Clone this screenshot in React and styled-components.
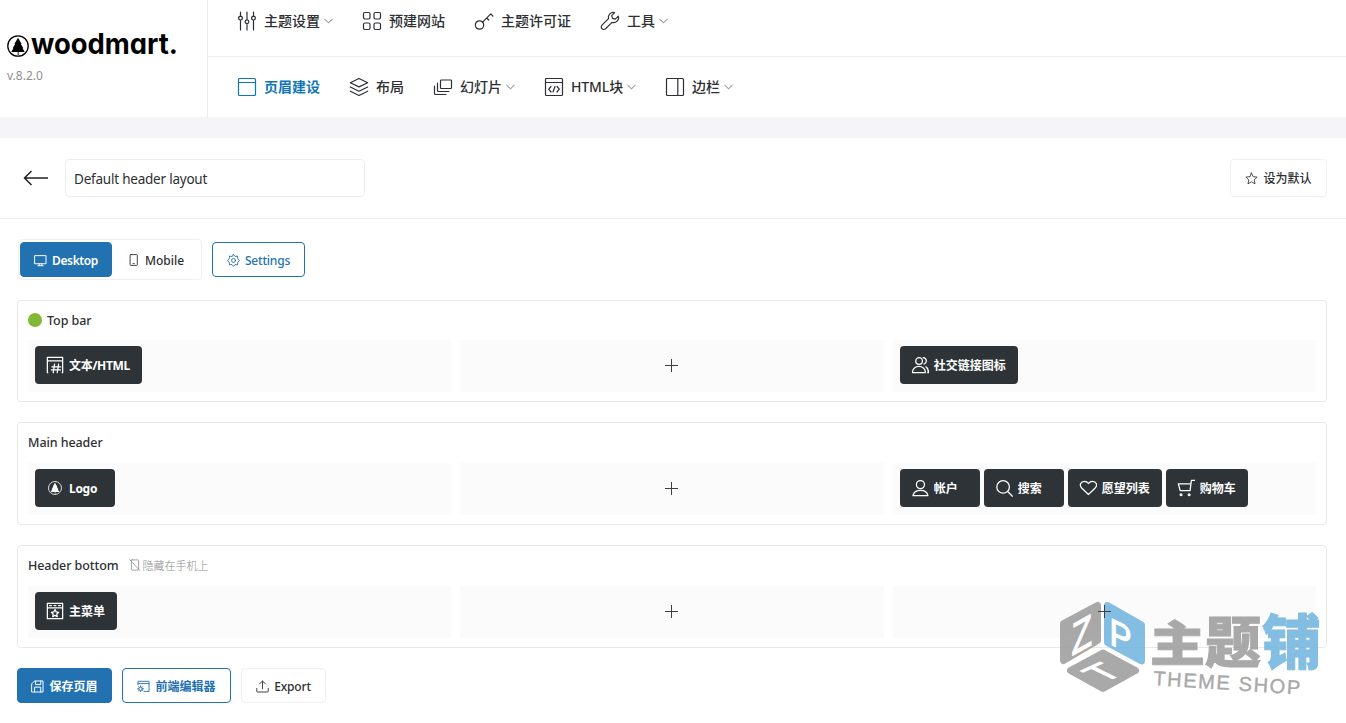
import React from 'react';
import styled, { createGlobalStyle } from 'styled-components';

const GlobalStyle = createGlobalStyle`
  * {
    box-sizing: border-box;
  }

  body {
    margin: 0;
    background: #fff;
    color: #2d2f33;
    font-family: "Noto Sans", "Noto Sans CJK SC", sans-serif;
    font-size: 13px;
    overflow: hidden;
  }
`;

const Page = styled.div`
  position: relative;
  width: 1346px;
  height: 723px;
  overflow: hidden;
`;

const Masthead = styled.header`
  display: flex;
  height: 117px;
`;

const Brand = styled.div`
  width: 208px;
  padding: 25px 0 0 7px;
  border-right: 1px solid #ebebeb;

  > svg {
    display: block;
    overflow: visible;
  }
`;

const LogoText = styled.text`
  font-family: Inter, sans-serif;
  font-size: 28.5px;
  font-weight: 700;
  font-feature-settings: "cv11" 1;
`;

const Version = styled.div`
  margin-top: 1px;
  font-size: 12px;
  line-height: 16px;
  color: #8e8e8e;
`;

const Nav = styled.nav`
  flex: 1;
`;

const NavRow = styled.div`
  display: flex;
  align-items: center;
  gap: 29px;
  height: ${props => props.$height}px;
  padding: ${props => props.$pad};
  border-bottom: ${props => props.$line ? '1px solid #efefef' : 'none'};
`;

const NavItem = styled.a`
  display: flex;
  align-items: center;
  height: 20px;
  font-size: 14px;
  line-height: 20px;
  font-weight: ${props => props.$active ? 700 : 500};
  letter-spacing: ${props => props.$spacing || 0}px;
  white-space: nowrap;
  color: ${props => props.$active ? '#0f76b8' : '#2d2f33'};

  > svg:first-child {
    margin-right: 7px;
  }

  .arrow {
    margin-left: 4px;
    color: #a0a0a0;
  }
`;

const Band = styled.div`
  height: 21px;
  background: #f5f5f7;
`;

const TitleBar = styled.div`
  display: flex;
  align-items: center;
  height: 81px;
  padding: 0 19px 0 22px;
  border-bottom: 1px solid #ececec;
`;

const NameInput = styled.input`
  width: 300px;
  height: 38px;
  margin: 0 auto 0 15px;
  padding: 2px 8px 0;
  border: 1px solid #ededed;
  border-radius: 4px;
  background: #fff;
  color: #2d2f33;
  font: 400 13.5px "Noto Sans", sans-serif;
  letter-spacing: -0.22px;
`;

const Button = styled.button`
  display: flex;
  align-items: center;
  justify-content: center;
  gap: 5px;
  width: ${props => props.$width}px;
  height: ${props => props.$height || 35}px;
  padding: ${props => props.$height ? 0 : '1px'} 0 0;
  border: 1px solid ${props => props.$kind === 'plain' ? '#f0f0f0' : '#2271b1'};
  border-color: ${props => props.$flat && 'transparent'};
  border-radius: 4px;
  background: ${props => props.$kind === 'primary' ? '#2271b1' : '#fff'};
  color: ${props => props.$kind === 'primary' ? '#fff' : props.$kind === 'outline' ? '#2271b1' : '#2d2f33'};
  font-family: inherit;
  font-size: 12px;
  font-weight: ${props => props.$weight || 500};
  letter-spacing: ${props => props.$spacing || 0}px;
  white-space: nowrap;
`;

const Toolbar = styled.div`
  display: flex;
  align-items: center;
  gap: 10px;
  margin: 20px 0 20px 18px;
`;

const Switcher = styled.div`
  display: flex;
  width: 184px;
  height: 41px;
  padding: 2px 1px;
  border: 1px solid #f0f0f0;
  border-radius: 4px;
`;

const Rows = styled.main`
  display: flex;
  flex-direction: column;
  gap: 20px;
  padding: 0 19px 0 17px;
`;

const Card = styled.section`
  height: ${props => props.$height}px;
  padding: 0 10px;
  border: 1px solid #e8e8e8;
  border-radius: 4px;
`;

const CardTitle = styled.div`
  display: flex;
  align-items: center;
  height: ${props => props.$height}px;
  padding-bottom: ${props => props.$height < 40 ? 1 : 2}px;
  font-size: 12.5px;
  letter-spacing: -0.08px;
  font-weight: 500;
`;

const Dot = styled.i`
  width: 14px;
  height: 14px;
  margin-right: 5px;
  border-radius: 50%;
  background: #83b735;
`;

const Hint = styled.span`
  display: flex;
  align-items: center;
  gap: 2px;
  margin-left: 10px;
  font-size: 11px;
  font-weight: 300;
  color: #8a8a8a;
  letter-spacing: 0;
`;

const Columns = styled.div`
  display: grid;
  grid-template-columns: repeat(3, 1fr);
  gap: 9px;
`;

const Column = styled.div`
  display: flex;
  align-items: center;
  justify-content: ${props => props.$empty ? 'center' : 'flex-start'};
  gap: 4px;
  height: 52px;
  padding: 0 7px 2px;
  background: #fbfbfb;
`;

const Element = styled.div`
  display: flex;
  align-items: center;
  gap: 5px;
  min-width: 80px;
  height: 38px;
  padding: 0 12px 0 11px;
  border-radius: 4px;
  background: #2d3337;
  color: #fff;
  font-size: 12px;
  font-weight: 700;
  letter-spacing: ${props => props.$spacing || 0}px;
  white-space: nowrap;
`;

const LogoSlot = styled.span`
  display: flex;
  justify-content: center;
  width: 18px;
`;

const PlusIcon = styled.svg`
  position: relative;
  z-index: 2;
`;

const Footer = styled.footer`
  display: flex;
  gap: 10px;
  padding: 20px 0 0 17px;
`;

const Watermark = styled.svg`
  position: absolute;
  left: 1050px;
  top: 590px;
  z-index: 1;
  opacity: 0.9;
  pointer-events: none;
`;

const paths = {
  sliders: <path d="M3.5 1v4.5M3.5 9v10M10 1v8M10 12.5V19M16.5 1v4.5M16.5 9v10M3.5 5.2a1.9 1.9 0 1 0 0 3.8 1.9 1.9 0 0 0 0-3.8ZM10 8.8a1.9 1.9 0 1 0 0 3.8 1.9 1.9 0 0 0 0-3.8ZM16.5 5.2a1.9 1.9 0 1 0 0 3.8 1.9 1.9 0 0 0 0-3.8Z" />,
  grid: <><rect x="1.5" y="1.5" width="6.5" height="6.5" rx="1.4" /><rect x="12" y="1.5" width="6.5" height="6.5" rx="1.4" /><rect x="1.5" y="12" width="6.5" height="6.5" rx="1.4" /><rect x="12" y="12" width="6.5" height="6.5" rx="1.4" /></>,
  key: <><circle cx="5.5" cy="14" r="4.2" /><path d="m8.6 11.1 8.2-8.3 2 2.4M12.7 7l2 2" /></>,
  wrench: <path d="M14.6 1.6a5 5 0 0 0-6.1 6.1L2 14.2a2.4 2.4 0 0 0 0 3.5 2.4 2.4 0 0 0 3.6 0l6.4-6.3a5 5 0 0 0 6.3-6.3l-3 3-2.8-.7-.8-2.8Z" />,
  layout: <><rect x="1.5" y="1.5" width="17" height="17" rx="1" /><path d="M1.5 5.5h17" /></>,
  layers: <path d="m10 1.5 8.7 4.2-8.7 4.2-8.7-4.2ZM1.3 10l8.7 4.2 8.7-4.2M1.3 14.2 10 18.5l8.7-4.3" />,
  slides: <><rect x="7.5" y="3" width="11" height="8.5" rx=".8" /><path d="M4.5 6v7.5q0 1 1 1H16M1.5 9v7.5q0 1 1 1H13" /></>,
  html: <><rect x="1.5" y="1.5" width="17" height="17" rx="1" /><path d="M1.5 5.5h17M7 9.5l-2.3 2.7L7 15M13 9.5l2.3 2.7L13 15M11 9.5l-2 5.5" /></>,
  sidebar: <><rect x="1.5" y="1.5" width="17" height="17" rx="1" /><path d="M12.8 1.5v17" /></>,
  desktop: <path d="M1.5 2.5h17v12.5h-17ZM6 18h8M8 15v3M12 15v3" />,
  mobile: <><rect x="3.5" y="1" width="12" height="18" rx="1.2" /><path d="M8.5 16h2" /></>,
  mobileOff: <><rect x="4" y="1.5" width="12" height="17" rx="1" /><path d="m1 1 17 18" /></>,
  gear: <><path d="m10 1 2.4 2.8 3.7-.6.4 3.6L19 10l-2.5 3.2-.4 3.6-3.7-.6L10 19l-2.4-2.8-3.7.6-.4-3.6L1 10l2.5-3.2.4-3.6 3.7.6Z" /><circle cx="10" cy="10" r="3" /></>,
  star: <path d="m10 1.5 2.6 5.7 6 .7-4.4 4.2 1.2 6.1-5.4-3.1-5.4 3.1 1.2-6.1L1.4 7.9l6-.7Z" />,
  text: <path d="M2 18.5h-.5v-17h17v17H18M1.5 5.5h17M9.5 9 8 18.5M14 9l-1.500 9.500M6.500 12h10M6 15.500h10" />,
  social: <><circle cx="9" cy="5.500" r="3.700" /><path d="M1.800 18.500q-.6-3 2-5.200 2-1.800 5-1.800t5 1.800q2.600 2.200 2 5.200ZM13.500 1.800a3.700 3.700 0 0 1 1 7.200M16.500 12q3 2 3 6.500h-1" /></>,
  user: <><circle cx="10.500" cy="6.200" r="4.500" /><path d="M2.200 18.500q1-5.800 8.300-5.800t8.300 5.800Z" /></>,
  search: <><circle cx="9" cy="8.800" r="7" /><path d="m14.300 14.100 5 5" /></>,
  heart: <path d="M10.500 17.300 3 10C-.3 6.500 2.300 2.600 6 2.600 8 2.600 9.500 3.600 10.500 5c1-1.400 2.500-2.400 4.500-2.400 3.700 0 6.300 3.900 3 7.400Z" />,
  cart: <><path d="M19.500 1.500H16l-1.500 11.500H3.500L1.500 5.500H15" /><circle cx="4.500" cy="17.500" r="1" /><circle cx="13.500" cy="17.500" r="1" /></>,
  menu: <><path d="M1.500 1.500h17v17h-17ZM1.500 6.500h17M4 4h2M9 4h2M14 4h2" /><path d="m10 8.500 1.300 2.500 2.700.4-2 2 .5 2.800-2.500-1.300-2.500 1.300.5-2.800-2-2 2.700-.4Z" /></>,
  save: <><path d="M1.500 5.500l4-4h13v17h-17Z" /><path d="M7 1.500v5.500h8V1.500M5.500 18.500V11h9.500v7.500" /></>,
  editor: <><path d="M1.500 7V2h17v15.500H11M1.500 5.500h17" /><circle cx="5.500" cy="13.500" r="2.700" /><path d="M5.500 9v1.500M5.500 16.500V18M1 13.500h1.500M8.500 13.500H10M2.300 10.300l1 1M7.700 15.700l1 1M2.300 16.700l1-1M7.700 11.300l1-1" /></>,
  upload: <path d="M10 13.500V1.500M5.500 6 10 1.500 14.500 6M1.200 13v4.500q0 1 1 1h15.600q1 0 1-1V13" />,
};

const Icon = ({ name, size = 20, stroke = 1.2 }) => (
  <svg width={size} height={size} viewBox="0 0 20 20" fill="none" stroke="currentColor" strokeWidth={stroke} strokeLinejoin="round" strokeLinecap="round">
    {paths[name]}
  </svg>
);

const Chevron = () => (
  <svg className="arrow" width="9" height="6" viewBox="0 0 9 6" fill="none" stroke="currentColor" strokeWidth="1.1">
    <path d="m.5 .8 4 4 4-4" />
  </svg>
);

const TreeMark = ({ size }) => (
  <svg width={size} height={size} viewBox="0 0 22 22" overflow="visible">
    <circle cx="11" cy="11" r="10.2" fill="none" stroke="currentColor" strokeWidth="1.3" />
    <path d="M11 2.8 14.6 9h-.7l2.4 4.200h-.7l2.100 3.900h-6.100V20h-.9v-2.900H4.300l2.100-3.900h-.7L8.100 9h-.7Z" fill="currentColor" />
  </svg>
);

const Plus = () => (
  <PlusIcon width="13" height="13" viewBox="0 0 13 13" stroke="#3c3f42">
    <path d="M6.5 0v13M0 6.5h13" />
  </PlusIcon>
);

const topNav = [
  { icon: 'sliders', label: '主题设置', arrow: true },
  { icon: 'grid', label: '预建网站' },
  { icon: 'key', label: '主题许可证' },
  { icon: 'wrench', label: '工具', arrow: true },
];

const bottomNav = [
  { icon: 'layout', label: '页眉建设', active: true },
  { icon: 'layers', label: '布局' },
  { icon: 'slides', label: '幻灯片', arrow: true },
  { icon: 'html', label: 'HTML块', arrow: true, spacing: -0.12 },
  { icon: 'sidebar', label: '边栏', arrow: true },
];

const rows = [
  {
    title: 'Top bar',
    dot: true,
    height: 102,
    columns: [
      [{ icon: 'text', label: '文本/HTML', spacing: -0.3 }],
      [],
      [{ icon: 'social', label: '社交链接图标' }],
    ],
  },
  {
    title: 'Main header',
    height: 103,
    columns: [
      [{ icon: 'logo', label: 'Logo', spacing: -0.3 }],
      [],
      [
        { icon: 'user', label: '帐户' },
        { icon: 'search', label: '搜索' },
        { icon: 'heart', label: '愿望列表' },
        { icon: 'cart', label: '购物车' },
      ],
    ],
  },
  {
    title: 'Header bottom',
    hint: '隐藏在手机上',
    height: 103,
    columns: [[{ icon: 'menu', label: '主菜单' }], [], []],
  },
];

const NavList = ({ items }) => items.map(item => (
  <NavItem key={item.label} $active={item.active} $spacing={item.spacing}>
    <Icon name={item.icon} />
    <span>{item.label}</span>
    {item.arrow && <Chevron />}
  </NavItem>
));

function HeaderRow({ row }) {
  return (
    <Card $height={row.height}>
      <CardTitle $height={row.height - 63}>
        {row.dot && <Dot />}
        {row.title}
        {row.hint && <Hint><Icon name="mobileOff" size={12} stroke={1.3} />{row.hint}</Hint>}
      </CardTitle>
      <Columns>
        {row.columns.map((column, i) => (
          <Column key={i} $empty={!column.length}>
            {column.length === 0 && <Plus />}
            {column.map(item => (
              <Element key={item.label} $spacing={item.spacing}>
                {item.icon === 'logo'
                  ? <LogoSlot><TreeMark size={14} /></LogoSlot>
                  : <Icon name={item.icon} size={18} stroke={1.4} />}
                {item.label}
              </Element>
            ))}
          </Column>
        ))}
      </Columns>
    </Card>
  );
}

function App() {
  return (
    <Page>
      <GlobalStyle />
      <Masthead>
        <Brand>
          <svg width="180" height="42" viewBox="0 0 180 42" color="#000">
            <svg y="10" width="22" height="22" overflow="visible"><TreeMark size={22} /></svg>
            <LogoText x="24" y="29" textLength="147" lengthAdjust="spacingAndGlyphs">woodmart.</LogoText>
          </svg>
          <Version>v.8.2.0</Version>
        </Brand>
        <Nav>
          <NavRow $height={57} $pad="0 0 15px 29px" $line><NavList items={topNav} /></NavRow>
          <NavRow $height={60} $pad="0 0 0 29px"><NavList items={bottomNav} /></NavRow>
        </Nav>
      </Masthead>
      <Band />
      <TitleBar>
        <svg width="28" height="18" viewBox="0 0 28 18" fill="none" stroke="#222" strokeWidth="1.5">
          <path d="M26 9H2.5M9.5 2l-7 7 7 7" />
        </svg>
        <NameInput defaultValue="Default header layout" />
        <Button $kind="plain" $width={97} $height={38}>
          <Icon name="star" size={13} stroke={1.3} />设为默认
        </Button>
      </TitleBar>
      <Toolbar>
        <Switcher>
          <Button $kind="primary" $width={92} $weight={600} $spacing={-0.4}><Icon name="desktop" size={13} stroke={1.5} />Desktop</Button>
          <Button $kind="plain" $flat $width={88}><Icon name="mobile" size={12} stroke={1.5} />Mobile</Button>
        </Switcher>
        <Button $kind="outline" $width={93} $spacing={-0.2}><Icon name="gear" size={13} stroke={1.4} />Settings</Button>
      </Toolbar>
      <Rows>
        {rows.map(row => <HeaderRow key={row.title} row={row} />)}
      </Rows>
      <Footer>
        <Button $kind="primary" $width={95} $weight={700}><Icon name="save" size={13} stroke={1.5} />保存页眉</Button>
        <Button $kind="outline" $width={109} $weight={700}><Icon name="editor" size={13} stroke={1.4} />前端编辑器</Button>
        <Button $kind="plain" $width={85} $spacing={-0.15}><Icon name="upload" size={13} stroke={1.4} />Export</Button>
      </Footer>
      <Watermark width="290" height="120" viewBox="1050 590 290 120">
        <g strokeWidth="7" strokeLinejoin="round">
          <path d="M1063.5 623.5 1097.5 605.5V640.5L1063.5 660.5Z" fill="#a0a0a0" stroke="#a0a0a0" />
          <path d="M1107.5 605.5 1141.5 625V661L1107.5 642.5Z" fill="#77b7df" stroke="#77b7df" />
          <path d="M1070.5 670.5 1103 653 1135.5 670.5 1103 688.5Z" fill="#a0a0a0" stroke="#a0a0a0" />
        </g>
        <g fill="#fff" stroke="#fff" strokeWidth="1.2" fontFamily="Liberation Sans">
          <text transform="matrix(.75 -.42 0 1 1071.5 656)" fontSize="45">Z</text>
          <text transform="matrix(.87 .4 0 1 1109.5 644)" fontSize="38">P</text>
          <text transform="matrix(.87 -.4 .87 .42 1103.5 683)" fontSize="40">T</text>
        </g>
        <g fontFamily="Noto Sans CJK SC" fontWeight="900" strokeWidth="1">
          <g fill="#a0a0a0" stroke="#a0a0a0">
            <text transform="matrix(1 0 0 .87 1150 660.5)" fontSize="55">主</text>
            <text transform="matrix(1 0 0 .98 1205 662)" fontSize="56">题</text>
          </g>
          <text x="1262" y="664" fontSize="59" fill="#77b7df" stroke="#77b7df">铺</text>
        </g>
        <text transform="translate(1153 685) rotate(3.7)" textLength="147" fontFamily="Liberation Sans" fontSize="20" fill="#a0a0a0" stroke="#a0a0a0" strokeWidth=".4">THEME SHOP</text>
      </Watermark>
    </Page>
  );
}

export default App;
